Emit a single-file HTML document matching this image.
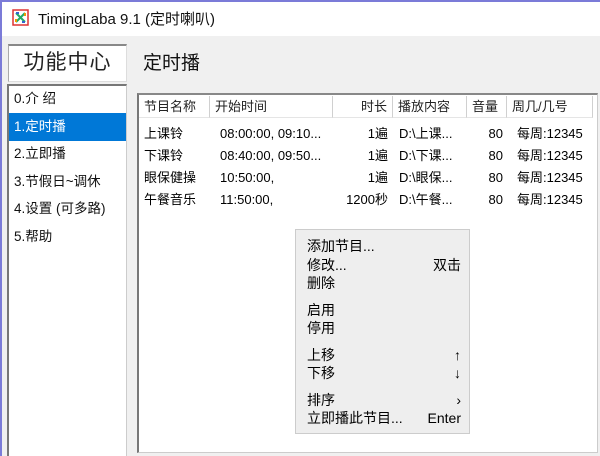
<!DOCTYPE html><html><head><meta charset="utf-8"><style>
*{margin:0;padding:0;box-sizing:border-box}
body{width:600px;height:456px;overflow:hidden;background:#f0f0f0;position:relative;font-family:"Liberation Sans","Noto Sans CJK SC",sans-serif;font-size:13px;color:#000}
.a{position:absolute;white-space:nowrap}
.hd{position:absolute;top:96px;height:22px;border-right:1px solid #d0d0d0;border-bottom:1px solid #e5e5e5;background:#fff;line-height:21px;padding:0 5px;color:#222}
.m div{height:18.5px;line-height:18.5px;position:relative}
.m span{position:absolute;right:8px}
</style></head><body>
<div class="a" style="left:0;top:0;width:600px;height:2px;background:#7b7bd8"></div>
<div class="a" style="left:0;top:0;width:2px;height:456px;background:#7b7bd8"></div>
<div class="a" style="left:2px;top:2px;width:598px;height:34px;background:#fff"></div>
<svg class="a" style="left:12px;top:9px" width="17" height="17" viewBox="0 0 17 17"><rect x="1" y="1" width="15" height="15" fill="#fff" stroke="#d33" stroke-width="1.5"/><path d="M4 4L13 13M13 4L4 13" stroke="#2a6" stroke-width="2"/><path d="M4 4h3M10 13h3" stroke="#36c" stroke-width="2"/><path d="M13 4v3M4 13v-3" stroke="#e90" stroke-width="2"/></svg>
<div class="a" style="left:38px;top:8px;font-size:15px;color:#111">TimingLaba 9.1 (定时喇叭)</div>
<div class="a" style="left:8px;top:44px;width:119px;height:38px;background:#fff;border-top:2px solid #888;border-left:1px solid #aaa;border-right:1px solid #ddd;border-bottom:1px solid #ddd;font-size:21px;line-height:34px;text-align:center;letter-spacing:1px;color:#222">功能中心</div>
<div class="a" style="left:7px;top:84px;width:120px;height:372px;background:#fff;border-top:2px solid #777;border-left:2px solid #777;border-right:1px solid #ccc"></div>
<div class="a" style="left:9px;top:113px;width:117px;height:28px;background:#0078d7"></div>
<div class="a" style="left:14px;top:85px;line-height:27.6px;font-size:13.5px;color:#111">0.介 绍<br><span style="color:#fff">1.定时播</span><br>2.立即播<br>3.节假日~调休<br>4.设置 (可多路)<br>5.帮助</div>
<div class="a" style="left:143px;top:48px;font-size:19px;color:#111">定时播</div>
<div class="a" style="left:137px;top:93px;width:461px;height:360px;background:#fff;border-top:2px solid #888;border-left:2px solid #777;border-right:1px solid #ccc;border-bottom:1px solid #ccc"></div>
<div class="hd" style="left:139px;width:71px">节目名称</div>
<div class="hd" style="left:210px;width:123px">开始时间</div>
<div class="hd" style="left:333px;width:60px;text-align:right">时长</div>
<div class="hd" style="left:393px;width:74px">播放内容</div>
<div class="hd" style="left:467px;width:40px">音量</div>
<div class="hd" style="left:507px;width:86px">周几/几号</div>
<div class="a" style="left:144px;top:123px;line-height:22px">上课铃<br>下课铃<br>眼保健操<br>午餐音乐</div>
<div class="a" style="left:220px;top:123px;line-height:22px">08:00:00, 09:10...<br>08:40:00, 09:50...<br>10:50:00,<br>11:50:00,</div>
<div class="a" style="left:333px;top:123px;width:55px;text-align:right;line-height:22px">1遍<br>1遍<br>1遍<br>1200秒</div>
<div class="a" style="left:399px;top:123px;line-height:22px">D:\上课...<br>D:\下课...<br>D:\眼保...<br>D:\午餐...</div>
<div class="a" style="left:467px;top:123px;width:36px;text-align:right;line-height:22px">80<br>80<br>80<br>80</div>
<div class="a" style="left:517px;top:123px;line-height:22px">每周:12345<br>每周:12345<br>每周:12345<br>每周:12345</div>
<div class="a m" style="left:295px;top:229px;width:175px;height:205px;background:#eeeeee;border:1px solid #ccc;padding:7px 0 0 11px;font-size:14px">
<div>添加节目...</div><div>修改...<span>双击</span></div><div>删除</div>
<div style="margin-top:8px">启用</div><div>停用</div>
<div style="margin-top:8px">上移<span>↑</span></div><div>下移<span>↓</span></div>
<div style="margin-top:8px">排序<span>›</span></div><div>立即播此节目...<span>Enter</span></div>
</div>
</body></html>
